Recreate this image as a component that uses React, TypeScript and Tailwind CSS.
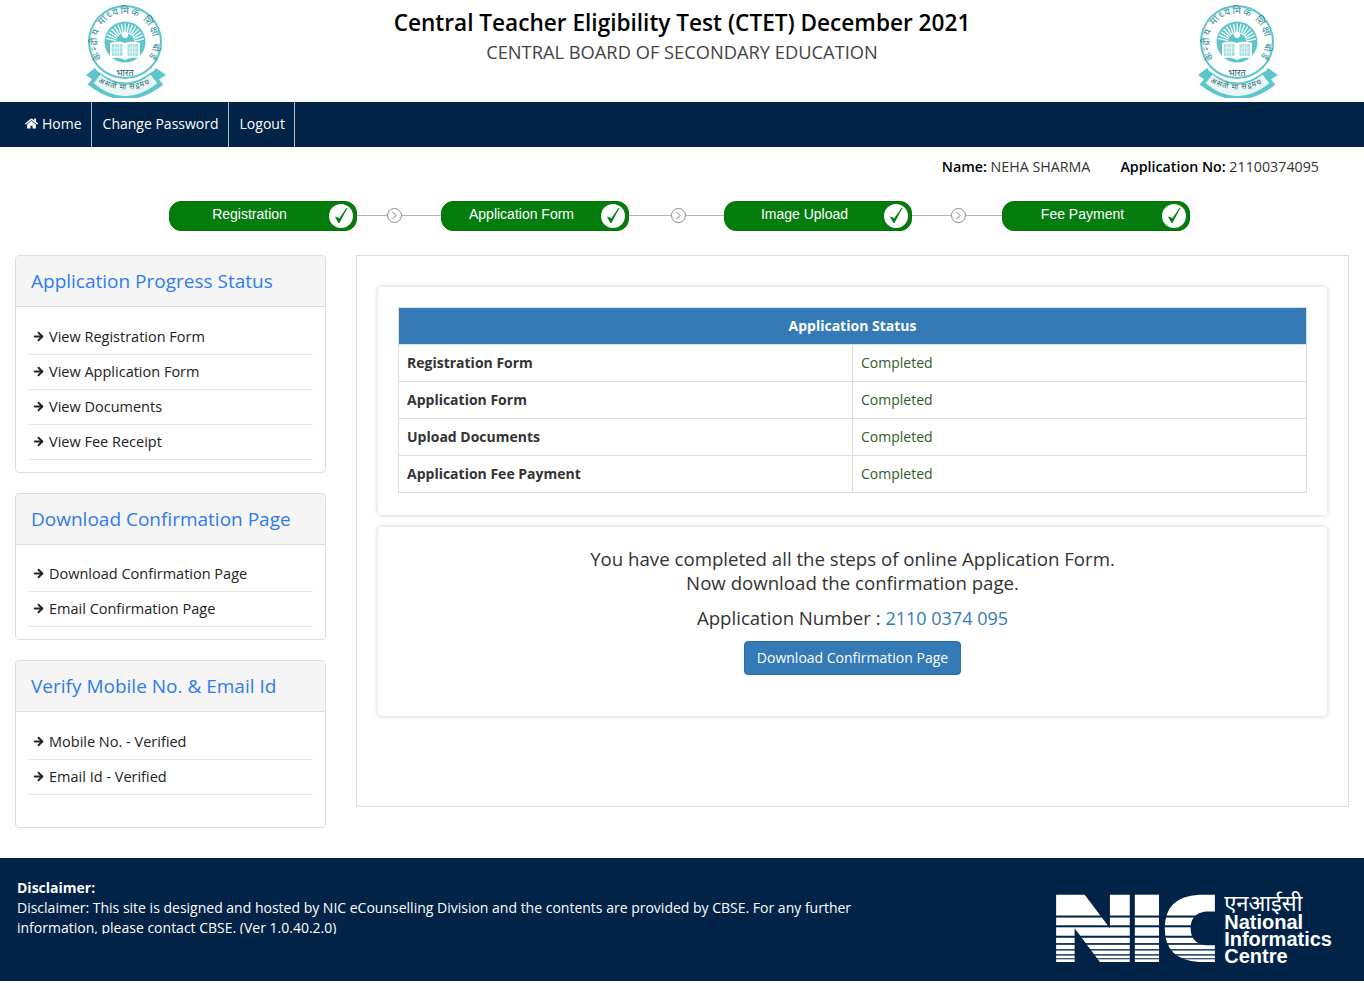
import React from "react";
import { ArrowRight } from "lucide-react";
import { FaHome } from "react-icons/fa";

const font = "font-['Open_Sans','Noto_Sans',sans-serif]";

const steps = [
  { label: "Registration", connector: "w-[84px] pr-[10px]" },
  { label: "Application Form", connector: "w-[95px] pl-[4px]" },
  { label: "Image Upload", connector: "w-[90px] pl-[2px]" },
  { label: "Fee Payment", connector: "" },
];

const panels = [
  {
    title: "Application Progress Status",
    items: ["View Registration Form", "View Application Form", "View Documents", "View Fee Receipt"],
    spacing: "pb-[12px]",
    listTop: "mt-[13px]",
  },
  {
    title: "Download Confirmation Page",
    items: ["Download Confirmation Page", "Email Confirmation Page"],
    spacing: "pb-[12px]",
    listTop: "mt-[12px]",
  },
  {
    title: "Verify Mobile No. & Email Id",
    items: ["Mobile No. - Verified", "Email Id - Verified"],
    spacing: "pb-[32px]",
    listTop: "mt-[13px]",
  },
];

const statusRows = ["Registration Form", "Application Form", "Upload Documents", "Application Fee Payment"];

function CbseLogo() {
  const teal = "#5fc5cd";
  const rays = Array.from({ length: 15 }, (_, i) => -77 + i * 11);
  return (
    <svg width="82" height="93" viewBox="0 0 82 93" className="mt-[5px]">
      <defs>
        <path id="ring" d="M17 53 A28 28 0 1 1 63 53" />
        <path id="motto" d="M13 77 Q40 92 68 77" />
      </defs>
      {/* ribbon tails and band */}
      <path d="M1 70 L10 63 L20 76 L10 84 L8 75 Z" fill={teal} />
      <path d="M81 70 L71 63 L61 76 L71 84 L73 75 Z" fill={teal} />
      <path d="M8 73 Q40 99 73 73" fill="none" stroke={teal} strokeWidth="17" />
      <path d="M12 74 Q40 97 69 74" fill="none" stroke="#e9f7f8" strokeWidth="11" />
      {/* seal */}
      <circle cx="40" cy="37" r="37" fill={teal} />
      <circle cx="40" cy="37" r="35" fill="#fff" />
      <text fontSize="10" fill="#35909a" fontFamily="'Noto Sans', sans-serif">
        <textPath href="#ring" textLength="120" lengthAdjust="spacing">
          केन्द्रीय माध्यमिक शिक्षा बोर्ड
        </textPath>
      </text>
      <circle cx="40" cy="37" r="20.5" fill={teal} />
      {rays.map((r) => (
        <rect key={r} x="39.500" y="18.500" width="1.300" height="10" fill="#fff" transform={`rotate(${r} 40 38)`} />
      ))}
      <path d="M32 38 A8 8 0 0 1 48 38 Z" fill={teal} />
      <circle cx="40" cy="30" r="3" fill="#fff" />
      <path d="M25 38 Q33 35 40 38 Q47 35 55 38 V54 Q47 51 40 55 Q33 51 25 54 Z" fill="#fff" />
      <rect x="27" y="39" width="10.500" height="12" fill="#a5e0e4" />
      <rect x="42.500" y="39" width="10.500" height="12" fill="#a5e0e4" />
      <path d="M29.500 39v12M32 39v12M34.500 39v12M45 39v12M47.500 39v12M50 39v12M27 43h10.500M27 47h10.500M42.500 43h10.500M42.500 47h10.500" stroke="#fff" strokeWidth="0.6" />
      <text x="40" y="71" textAnchor="middle" fontSize="9" fill="#2f5f66" fontFamily="'Noto Sans', sans-serif">
        भारत
      </text>
      <text fontSize="7.500" fill="#2f5f66" fontFamily="'Noto Sans', sans-serif">
        <textPath href="#motto" textLength="54" lengthAdjust="spacing">
          असतो मा सद्गमय
        </textPath>
      </text>
    </svg>
  );
}

function NicLogo() {
  const gaps = [
    [112, 6], [141, 6], [172, 6], [194, 5], [212, 4], [227, 4], [239, 3],
  ];
  return (
    <svg width="160" height="74" viewBox="45 45 475 220" className="mt-[35px]">
      <path d="M45 50H130L205 150V50H264V250H175L100 150V250H45Z" fill="#fff" />
      <rect x="279" y="50" width="72" height="200" fill="#fff" />
      <path d="M517 50V100H490Q445 105 445 150Q445 195 490 200H517V250H470Q368 245 368 150Q368 55 470 50Z" fill="#fff" />
      {gaps.map(([y, h]) => (
        <rect key={y} x="40" y={y} width="485" height={h} fill="#012348" />
      ))}
    </svg>
  );
}

function StepPill({ label }: { label: string }) {
  return (
    <div className="flex h-[30px] w-[188px] items-center rounded-[12px] border border-[#0a6d0a] bg-[#057c0e] px-[3px]">
      <span className="flex-1 pb-[4px] pr-[3px] text-center font-['Liberation_Sans',sans-serif] text-[14px] leading-none text-white">
        {label}
      </span>
      <span className="flex h-[24px] w-[24px] items-center justify-center rounded-full bg-white">
        <svg width="18" height="20" viewBox="0 0 18 20">
          <path d="M3.500 11 L7 17 L15 2 L7.500 12.500 Z" fill="#057c0e" stroke="#057c0e" strokeWidth="0.8" strokeLinejoin="round" />
        </svg>
      </span>
    </div>
  );
}

function Connector({ width }: { width: string }) {
  return (
    <div className={`mb-[1px] flex h-[1px] items-center justify-center bg-[#b5b5b5] ${width}`}>
      <span className="flex h-[15px] w-[15px] shrink-0 items-center justify-center rounded-full border border-[#8c8c8c] bg-white">
        <svg width="7" height="9" viewBox="0 0 7 9">
          <path d="M1.500 1 L5 4.500 L1.500 8" fill="none" stroke="#777" strokeWidth="1" />
        </svg>
      </span>
    </div>
  );
}

function SidePanel({ title, items, spacing, listTop }: { title: string; items: string[]; spacing: string; listTop: string }) {
  return (
    <div className={`rounded-[4px] border border-[#dddddd] bg-white ${spacing}`}>
      <div className="flex h-[51px] items-center rounded-t-[4px] border-b border-[#dddddd] bg-[#f5f5f5] pl-[15px] text-[19px] font-normal text-[#2f7bf0]">
        {title}
      </div>
      <ul className={`ml-[13px] mr-[12px] ${listTop}`}>
        {items.map((item) => (
          <li key={item} className="flex h-[35px] items-center gap-[4px] border-b border-[#e5e5e5] pb-[1px] pl-[3px] text-[14.500px] text-[#222]">
            <ArrowRight size={13} strokeWidth={3.5} className="text-[#222]" />
            {item}
          </li>
        ))}
      </ul>
    </div>
  );
}

export default function App() {
  return (
    <div className={`${font} flex min-h-[983px] flex-col bg-white text-[14px] text-[#333]`}>
      <header className="flex h-[102px] justify-between px-[85px]">
        <CbseLogo />
        <div className="pt-[6px] text-center">
          <h1 className="text-[22.600px] leading-[33px] font-semibold text-black">
            Central Teacher Eligibility Test (CTET) December 2021
          </h1>
          <h2 className="text-[18.300px] leading-[26px] text-[#444]">CENTRAL BOARD OF SECONDARY EDUCATION</h2>
        </div>
        <CbseLogo />
      </header>

      <nav className="flex h-[45px] bg-[#012348] pl-[15px] text-[14px] text-white">
        <a className="flex items-center gap-[4px] border-r border-[#bbbbbb] pb-[2px] pl-[10px] pr-[9px]">
          <FaHome size={13} />
          Home
        </a>
        <a className="flex items-center border-r border-[#bbbbbb] pb-[2px] pl-[11px] pr-[9px]">Change Password</a>
        <a className="flex items-center border-r border-[#bbbbbb] pb-[2px] pl-[11px] pr-[9px]">Logout</a>
      </nav>

      <div className="flex justify-end gap-[30px] pr-[45px] pt-[10px] text-[14.250px] leading-[19px]">
        <span>
          <b className="font-semibold text-black">Name:</b> NEHA SHARMA
        </span>
        <span>
          <b className="font-semibold text-black">Application No:</b> 21100374095
        </span>
      </div>

      <div className="mt-[25px] flex items-center pl-[169px]">
        {steps.map((step) => (
          <React.Fragment key={step.label}>
            <StepPill label={step.label} />
            {step.connector && <Connector width={step.connector} />}
          </React.Fragment>
        ))}
      </div>

      <main className="mt-[24px] flex items-start gap-[30px] px-[15px]">
        <aside className="flex w-[311px] shrink-0 flex-col gap-[20px]">
          {panels.map((panel) => (
            <SidePanel key={panel.title} {...panel} />
          ))}
        </aside>

        <section className="h-[552px] flex-1 border border-[#dddddd] bg-white px-[21px] pt-[31px]">
          <div className="rounded-[4px] bg-white px-[20px] pb-[22px] pt-[20px] shadow-[0_0_5px_rgba(0,0,0,0.2)]">
            <table className="w-full border-collapse text-[14px]">
              <thead>
                <tr>
                  <th colSpan={2} className="h-[37px] border border-[#dddddd] bg-[#337ab7] pb-[2px] font-bold text-white">
                    Application Status
                  </th>
                </tr>
              </thead>
              <tbody>
                {statusRows.map((row) => (
                  <tr key={row} className="h-[37px]">
                    <td className="w-[454px] border border-[#dddddd] pb-[2px] pl-[8px] font-bold">{row}</td>
                    <td className="border border-[#dddddd] pb-[2px] pl-[8px] text-[#2f5d1e]">Completed</td>
                  </tr>
                ))}
              </tbody>
            </table>
          </div>

          <div className="mt-[12px] h-[189px] rounded-[4px] bg-white pt-[20px] text-center shadow-[0_0_5px_rgba(0,0,0,0.2)]">
            <p className="text-[18.650px] leading-[24px]">
              You have completed all the steps of online Application Form.
              <br />
              Now download the confirmation page.
            </p>
            <p className="mt-[11px] text-[18.600px] leading-[24px]">
              Application Number : <span className="text-[18px] font-medium text-[#337ab7]">2110 0374 095</span>
            </p>
            <button className="mt-[11px] h-[34px] rounded-[4px] border border-[#2e6da4] bg-[#337ab7] px-[12px] pb-[2px] text-[14px] text-white">
              Download Confirmation Page
            </button>
          </div>
        </section>
      </main>

      <footer className="mt-[30px] flex h-[123px] justify-between bg-[#012348] pl-[17px] pr-[32px] text-white">
        <div className="mt-[20px] h-[56px] w-[850px] overflow-hidden text-[14px] leading-[20px]">
          <div className="font-bold">Disclaimer:</div>
          Disclaimer: This site is designed and hosted by NIC eCounselling Division and the contents are provided by CBSE. For any further information, please contact CBSE. (Ver 1.0.40.2.0)
        </div>
        <div className="flex items-start gap-[8px]">
          <NicLogo />
          <div className="mt-[33px] font-['Liberation_Sans',sans-serif] text-[20px] leading-[17px] font-bold">
            <div className="mb-[1px] font-['Noto_Sans',sans-serif] text-[22px] leading-[22px] font-normal">एनआईसी</div>
            National
            <br />
            Informatics
            <br />
            Centre
          </div>
        </div>
      </footer>
    </div>
  );
}
